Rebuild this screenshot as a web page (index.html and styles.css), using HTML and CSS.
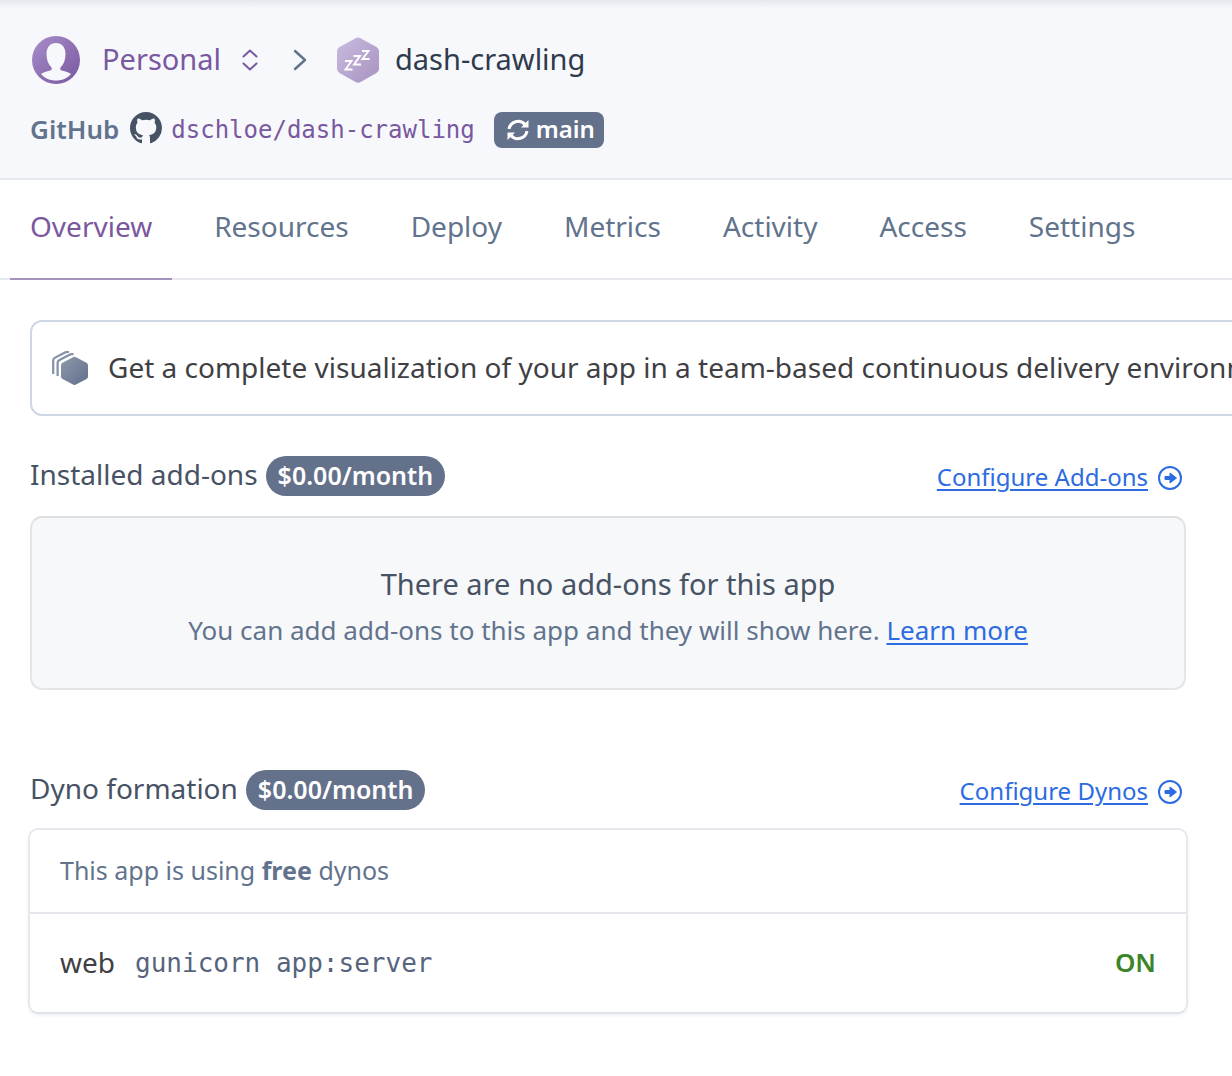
FILE: index.html
```html
<!DOCTYPE html>
<html lang="en">
<head>
<meta charset="utf-8">
<meta name="viewport" content="width=device-width, initial-scale=1">
<title>dash-crawling</title>
<link rel="stylesheet" href="styles.css">
</head>
<body>
<header class="header">
  <div class="crumbs">
    <button class="account" type="button">
      <svg class="avatar" viewBox="0 0 48 48" aria-hidden="true">
        <defs><linearGradient id="avatar-fill" x1="0" y1="0" x2="1" y2="1"><stop offset="0" stop-color="#a98dcb"/><stop offset="1" stop-color="#79589f"/></linearGradient></defs>
        <circle cx="24" cy="24" r="24" fill="url(#avatar-fill)"/>
        <path fill="#f7f8fc" d="M24 7c-6 0-9.500 4.500-9.500 11 0 6 2 10.500 5 13.500.8 2.500-.5 3-3 3.500-3 .6-5.500 1.500-7.500 3C13 42.500 18 44.500 24 44.500s11-2 15-6.500c-2-1.500-4.500-2.400-7.500-3-2.500-.5-3.800-1-3-3.500 3-3 5-7.500 5-13.500C33.500 11.500 30 7 24 7z"/>
      </svg>
      <span class="label">Personal</span>
      <svg class="sorter" viewBox="0 0 20 24" fill="none" stroke="#79589f" stroke-width="2" stroke-linecap="round" stroke-linejoin="round" aria-hidden="true"><path d="M3.500 8.500L10 2.500l6.500 6M3.500 15.500l6.500 6 6.500-6"/></svg>
    </button>
    <svg class="chevron" viewBox="0 0 14 22" fill="none" stroke="#62738d" stroke-width="2.400" stroke-linecap="round" stroke-linejoin="round" aria-hidden="true"><path d="M2 2l10 9-10 9"/></svg>
    <a class="app" href="#">
      <svg class="app-icon" viewBox="0 0 42 46" aria-hidden="true">
        <defs><linearGradient id="app-fill" x1="0" y1="0" x2="1" y2="1"><stop offset="0" stop-color="#c9bbe0"/><stop offset="1" stop-color="#a793bf"/></linearGradient></defs>
        <path fill="url(#app-fill)" d="M18.500 1.200a5 5 0 0 1 5 0L39.500 10a5 5 0 0 1 2.500 4v18a5 5 0 0 1-2.500 4l-16 9a5 5 0 0 1-5 0l-16-9A5 5 0 0 1 0 32V14a5 5 0 0 1 2.500-4z"/>
        <path fill="none" stroke="#fff" stroke-width="1.900" d="M8 24h6.500L8.500 32.500h7M16.500 19h6.500L17 27.500h7M25 14h6.500L25.500 22h7"/>
      </svg>
      <span class="label">dash-crawling</span>
    </a>
  </div>
  <div class="repo">
    <strong class="label">GitHub</strong>
    <svg class="github" viewBox="0 0 16 16" fill="#475264" aria-hidden="true"><path d="M8 0C3.580 0 0 3.580 0 8c0 3.540 2.290 6.530 5.470 7.590.4.070.55-.17.55-.38 0-.19-.01-.82-.01-1.490-2.010.37-2.530-.49-2.690-.94-.09-.23-.48-.94-.82-1.130-.28-.15-.68-.52-.01-.53.63-.01 1.080.58 1.230.82.72 1.210 1.870.87 2.330.66.07-.52.28-.87.51-1.070-1.780-.2-3.640-.89-3.640-3.950 0-.87.31-1.590.82-2.150-.08-.2-.36-1.020.08-2.120 0 0 .67-.21 2.200.82.64-.18 1.320-.27 2-.27s1.360.09 2 .27c1.530-1.040 2.200-.82 2.200-.82.44 1.100.16 1.920.08 2.120.51.56.82 1.270.82 2.150 0 3.070-1.870 3.750-3.650 3.950.29.25.54.73.54 1.480 0 1.070-.01 1.930-.01 2.200 0 .21.15.46.55.38A8.010 8.010 0 0 0 16 8c0-4.420-3.580-8-8-8z"/></svg>
    <a class="repo-link" href="#">dschloe/dash-crawling</a>
    <span class="branch">
      <svg class="sync" viewBox="0 0 24 24" fill="none" stroke="#fff" stroke-width="3" aria-hidden="true"><path d="M3 11A9.200 9.200 0 0 1 19 6.500M21 13A9.200 9.200 0 0 1 5 17.500"/><path fill="#fff" stroke="none" d="M22.500 2v7.500H15zM1.500 22v-7.500H9z"/></svg>
      <span class="label">main</span>
    </span>
  </div>
</header>
<nav class="tabs">
  <a class="tab active" href="#" aria-current="page">Overview</a>
  <a class="tab" href="#">Resources</a>
  <a class="tab" href="#">Deploy</a>
  <a class="tab" href="#">Metrics</a>
  <a class="tab" href="#">Activity</a>
  <a class="tab" href="#">Access</a>
  <a class="tab" href="#">Settings</a>
</nav>
<main class="main">
  <div class="banner">
    <svg class="pipeline" viewBox="0 0 36 34" aria-hidden="true">
      <defs><linearGradient id="pipe-fill" x1="0" y1="0" x2="1" y2="1"><stop offset="0" stop-color="#8d98ab"/><stop offset="1" stop-color="#62708c"/></linearGradient></defs>
      <path fill="url(#pipe-fill)" d="M21 6.200a3 3 0 0 1 3 0l10.500 5.600A3 3 0 0 1 36 14.400v11a3 3 0 0 1-1.500 2.600L24 33.600a3 3 0 0 1-3 0L10.500 28A3 3 0 0 1 9 25.400v-11a3 3 0 0 1 1.500-2.600z"/>
      <path fill="none" stroke="#8490a5" stroke-width="2.200" d="M1.200 23V9.500a3 3 0 0 1 1.500-2.600L13 1.500q1.800-.9 4-.6M5.600 25V11.800a3 3 0 0 1 1.500-2.600L17.500 3.700q1.800-.9 4-.3"/>
    </svg>
    <span class="label">Get a complete visualization of your app in a team-based continuous delivery environment</span>
  </div>

  <section class="section">
    <div class="section-head">
      <h2>Installed add-ons</h2>
      <span class="pill">$0.00/month</span>
      <a class="configure" href="#"><span class="label">Configure Add-ons</span>
        <svg class="go" viewBox="0 0 24 24" aria-hidden="true"><circle cx="12" cy="12" r="11" fill="none" stroke="#2c6be2" stroke-width="2"/><path fill="#2c6be2" stroke="#2c6be2" stroke-linejoin="round" d="M7 10.500h5V7l6.500 5-6.500 5v-3.500H7z"/></svg></a>
    </div>
    <div class="empty">
      <h3>There are no add-ons for this app</h3>
      <p>You can add add-ons to this app and they will show here. <a class="link" href="#">Learn more</a></p>
    </div>
  </section>

  <section class="section">
    <div class="section-head">
      <h2>Dyno formation</h2>
      <span class="pill">$0.00/month</span>
      <a class="configure" href="#"><span class="label">Configure Dynos</span>
        <svg class="go" viewBox="0 0 24 24" aria-hidden="true"><circle cx="12" cy="12" r="11" fill="none" stroke="#2c6be2" stroke-width="2"/><path fill="#2c6be2" stroke="#2c6be2" stroke-linejoin="round" d="M7 10.500h5V7l6.500 5-6.500 5v-3.500H7z"/></svg></a>
    </div>
    <div class="dynos">
      <p class="plan">This app is using <b>free</b> dynos</p>
      <div class="process">
        <span class="label">web</span>
        <code>gunicorn app:server</code>
        <span class="label state">ON</span>
      </div>
    </div>
  </section>
</main>
</body>
</html>
```
FILE: styles.css
```css
* { box-sizing: border-box; }

body {
  margin: 0;
  background: #fff;
  color: #3f3f44;
  font-family: "Noto Sans", "Open Sans", sans-serif;
  font-size: 28px;
  overflow-x: hidden;
}

svg { display: block; flex: none; }
h2, h3, p { margin: 0; font-weight: 400; }
a { color: inherit; text-decoration: none; }
code, .repo-link { font-family: "DejaVu Sans Mono", "Liberation Mono", monospace; }
.label { padding-bottom: 3px; }

.header {
  padding: 36px 30px 30px;
  background: linear-gradient(#e6e7ec, #f7f8fc 8px);
  border-bottom: 2px solid #e6e9f0;
}

.crumbs, .account, .app, .repo, .branch { display: flex; align-items: center; }
.crumbs { height: 48px; font-size: 29px; }
.account {
  gap: 22px;
  padding: 0 0 0 2px;
  border: 0;
  background: none;
  color: #79589f;
  font: inherit;
}
.avatar { width: 48px; height: 48px; }
.sorter { width: 20px; height: 24px; margin-left: -3px; }
.chevron { width: 14px; height: 22px; margin: 0 30px 0 33px; }
.app { gap: 16px; color: #2f3b4c; }
.app-icon { width: 42px; height: 46px; }

.repo { height: 36px; margin-top: 28px; color: #62738d; font-size: 26px; }
.repo strong { font-weight: 600; }
.github { width: 32px; height: 32px; margin: 0 9px 4px 11px; }
.repo-link { color: #79589f; font-size: 24px; }
.branch {
  gap: 6px;
  height: 36px;
  margin-left: 19px;
  padding: 0 9px 0 12px;
  border-radius: 8px;
  background: #64718b;
  color: #fff;
  font-size: 24px;
  font-weight: 600;
}
.sync { width: 24px; height: 24px; }

.tabs {
  display: flex;
  gap: 22px;
  height: 100px;
  padding: 0 10px;
  border-bottom: 2px solid #e6e9ee;
  color: #62738d;
}
.tab { height: 100px; padding: 0 20px; line-height: 92px; }
.tab.active { border-bottom: 2px solid #a493bd; color: #79589f; }

.main { padding: 40px 46px 62px 30px; }
.banner {
  display: flex;
  align-items: center;
  gap: 20px;
  height: 96px;
  margin-right: -160px;
  padding-left: 20px;
  border: 2px solid #cfd7e5;
  border-radius: 12px;
  white-space: nowrap;
}
.pipeline { width: 36px; height: 34px; }

.section { margin-top: 40px; }
.section + .section { margin-top: 80px; }
.section-head { display: flex; align-items: center; height: 40px; }
.section-head h2 { padding-bottom: 4px; color: #475264; font-size: 28px; }
.pill {
  height: 40px;
  margin-left: 8px;
  padding: 0 12px;
  border-radius: 20px;
  background: #64718b;
  color: #fff;
  font-size: 25px;
  font-weight: 600;
  line-height: 38px;
}
.configure {
  display: flex;
  align-items: center;
  gap: 10px;
  margin: 4px 4px 0 auto;
  color: #2c6be2;
  font-size: 24px;
}
.configure span, .link { text-decoration: underline; text-decoration-thickness: 2px; text-underline-offset: 3px; }
.go { width: 24px; height: 24px; }

.empty {
  margin-top: 20px;
  padding: 44px 20px 34px;
  border: 2px solid #e3e6e9;
  border-top-color: #dcdfe2;
  border-radius: 12px;
  background: #f7f8fa;
  text-align: center;
}
.empty h3 { color: #475264; font-size: 29px; line-height: 44px; }
.empty p { color: #62738d; font-size: 26px; line-height: 48px; }
.link { color: #2c6be2; }

.dynos {
  margin: 18px -2px 0;
  border: 2px solid #e6e8ed;
  border-bottom-color: #dfe2e8;
  border-radius: 10px;
  box-shadow: 0 2px 3px #f0f1f4;
}
.plan {
  height: 84px;
  padding: 0 30px;
  border-bottom: 2px solid #e3e6ec;
  color: #62738d;
  font-size: 25px;
  line-height: 80px;
}
.process { display: flex; align-items: center; gap: 20px; height: 98px; padding: 0 30px; }
.process code { color: #56657d; font-size: 26px; }
.state { margin-left: auto; color: #3b8427; font-size: 26px; font-weight: 600; }
```
